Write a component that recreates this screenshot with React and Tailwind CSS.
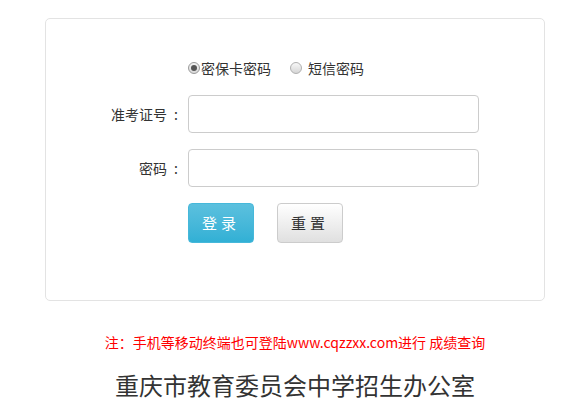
export default function App() {
  const font = { fontFamily: '"Noto Sans CJK SC", "Liberation Sans", sans-serif' };

  return (
    <div className="w-[590px] bg-white text-[#333]" style={font}>
      {/* Login card */}
      <div className="ml-[45px] mt-[18px] h-[283px] w-[500px] rounded-[5px] border border-[#e3e3e3] bg-white">
        {/* Radio row */}
        <div className="mt-[39px] flex items-center pl-[142px] text-[14px] leading-[20px] text-[#333]">
          <label className="flex items-center">
            <span className="flex h-[12px] w-[12px] items-center justify-center rounded-full border border-[#9a9a9a] bg-gradient-to-b from-[#f4f4f4] to-[#d8d8d8]">
              <span className="h-[6px] w-[6px] rounded-full bg-[#555]" />
            </span>
            <span className="ml-[1px]">密保卡密码</span>
          </label>
          <label className="ml-[19px] flex items-center">
            <span className="h-[12px] w-[12px] rounded-full border border-[#b0b0b0] bg-gradient-to-b from-[#f8f8f8] to-[#d6d6d6]" />
            <span className="ml-[6px]">短信密码</span>
          </label>
        </div>

        {/* Fields */}
        <div className="mt-[17px] flex flex-col gap-[16px]">
          <div className="flex items-center">
            <span className="w-[132px] text-right text-[14px] text-[#333]">
              准考证号<span className="ml-[7px]">:</span>
            </span>
            <input className="ml-[10px] h-[38px] w-[291px] rounded-[4px] border border-[#ccc] bg-white px-2 text-[13px] outline-none" />
          </div>
          <div className="flex items-center">
            <span className="w-[132px] text-right text-[14px] text-[#333]">
              密码<span className="ml-[7px]">:</span>
            </span>
            <input type="password" className="ml-[10px] h-[38px] w-[291px] rounded-[4px] border border-[#ccc] bg-white px-2 text-[13px] outline-none" />
          </div>
          <div className="flex items-center pl-[142px]">
            <button className="h-[40px] w-[66px] rounded-[4px] border border-[#46b8da] bg-gradient-to-b from-[#5bc0de] to-[#31b0d5] text-[15px] tracking-[4px] text-white">
              登录
            </button>
            <button className="ml-[23px] h-[40px] w-[66px] rounded-[4px] border border-[#ccc] bg-gradient-to-b from-white to-[#e0e0e0] text-[15px] tracking-[4px] text-[#333]">
              重置
            </button>
          </div>
        </div>
      </div>

      {/* Footer */}
      <p className="mt-[32px] text-center text-[14px] leading-[18px] text-[#ff0000]">
        注：手机等移动终端也可登陆www.cqzzxx.com进行 成绩查询
      </p>
      <h1 className="mt-[18px] text-center text-[24px] font-normal leading-[32px] text-[#333]">
        重庆市教育委员会中学招生办公室
      </h1>
    </div>
  );
}
